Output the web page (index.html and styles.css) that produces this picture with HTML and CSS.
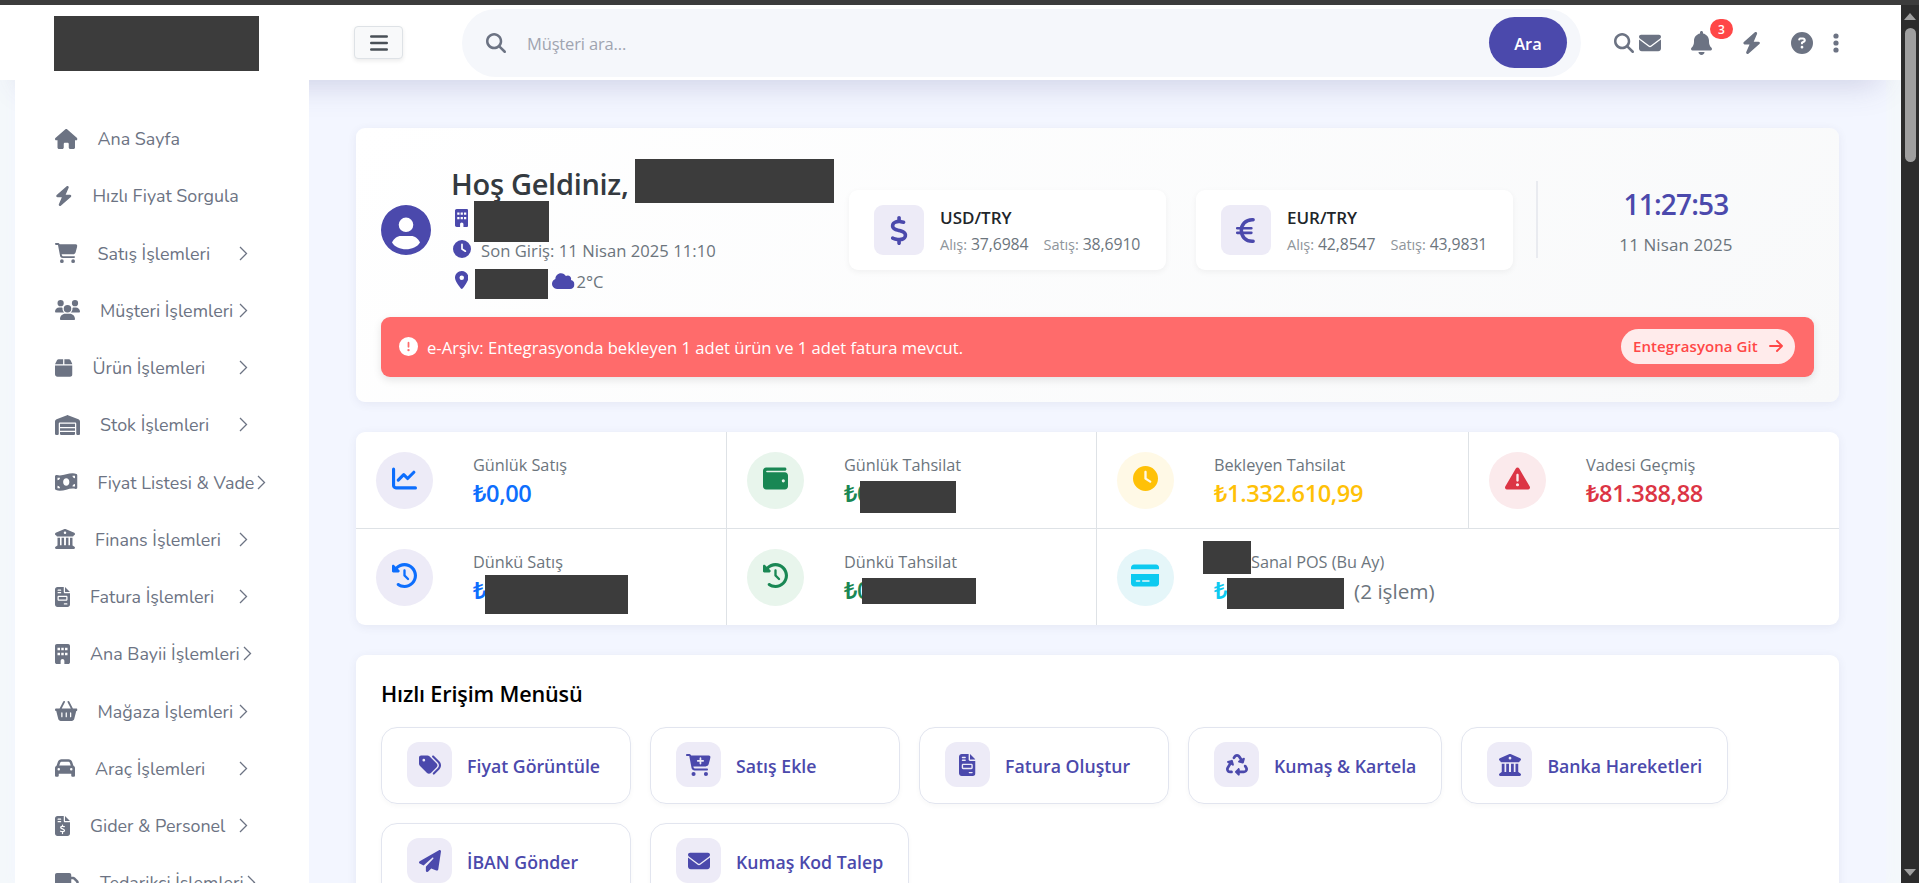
FILE: index.html
```html
<!DOCTYPE html>
<html lang="tr">
<head>
    <meta charset="UTF-8">
    <meta name="viewport" content="width=device-width, initial-scale=1.0">
    <title>Ana Sayfa</title>
    <link rel="stylesheet" href="styles.css">
</head>
<body>
    <!-- İkonlar -->
    <svg class="sprite" xmlns="http://www.w3.org/2000/svg">
        <symbol id="i-home" viewBox="0 0 576 512"><path d="M575.8 255.5c0 18-15 32.1-32 32.1h-32l.7 160.2c0 2.7-.2 5.4-.5 8.1V472c0 22.1-17.9 40-40 40H456c-1.1 0-2.2 0-3.3-.1c-1.4 .1-2.8 .1-4.2 .1H416 392c-22.1 0-40-17.9-40-40V448 384c0-17.7-14.3-32-32-32H256c-17.7 0-32 14.3-32 32v64 24c0 22.1-17.9 40-40 40H160 128.1c-1.5 0-3-.1-4.5-.2c-1.2 .1-2.4 .2-3.6 .2H104c-22.1 0-40-17.9-40-40V360c0-.9 0-1.9 .1-2.8V287.6H32c-18 0-32-14-32-32.1c0-9 3-17 10-24L266.4 8c7-7 15-8 22-8s15 2 21 7L564.8 231.5c8 7 12 15 11 24z"/></symbol>
        <symbol id="i-bolt" viewBox="0 0 448 512"><path d="M349.4 44.6c5.9-13.7 1.5-29.7-10.6-38.5s-28.6-8-39.9 1.8l-256 224c-10 8.8-13.6 22.9-8.9 35.3S50.7 288 64 288H175.5L98.6 467.4c-5.9 13.7-1.5 29.7 10.6 38.5s28.6 8 39.9-1.8l256-224c10-8.8 13.6-22.9 8.9-35.3s-16.6-20.7-30-20.7H272.5L349.4 44.6z"/></symbol>
        <symbol id="i-cart" viewBox="0 0 576 512"><path d="M0 24C0 10.7 10.7 0 24 0H69.5c22 0 41.5 12.8 50.6 32h411c26.3 0 45.5 25 38.6 50.4l-41 152.3c-8.5 31.4-37 53.3-69.5 53.3H170.7l5.4 28.5c2.2 11.3 12.1 19.5 23.6 19.5H488c13.3 0 24 10.7 24 24s-10.7 24-24 24H199.7c-34.6 0-64.3-24.6-70.7-58.5L77.4 54.5c-.7-3.8-4-6.5-7.9-6.5H24C10.7 48 0 37.3 0 24zM128 464a48 48 0 1 1 96 0 48 48 0 1 1 -96 0zm336-48a48 48 0 1 1 0 96 48 48 0 1 1 0-96z"/></symbol>
        <symbol id="i-cart-plus" viewBox="0 0 576 512"><path fill-rule="evenodd" d="M0 24C0 10.7 10.7 0 24 0H69.5c22 0 41.5 12.8 50.6 32h411c26.3 0 45.5 25 38.6 50.4l-41 152.3c-8.5 31.4-37 53.3-69.5 53.3H170.7l5.4 28.5c2.2 11.3 12.1 19.5 23.6 19.5H488c13.3 0 24 10.7 24 24s-10.7 24-24 24H199.7c-34.6 0-64.3-24.6-70.7-58.5L77.4 54.5c-.7-3.8-4-6.5-7.9-6.5H24C10.7 48 0 37.3 0 24zM128 464a48 48 0 1 1 96 0 48 48 0 1 1 -96 0zm336-48a48 48 0 1 1 0 96 48 48 0 1 1 0-96zM252 160c0 11 9 20 20 20h44v44c0 11 9 20 20 20s20-9 20-20V180h44c11 0 20-9 20-20s-9-20-20-20H356V96c0-11-9-20-20-20s-20 9-20 20v44H272c-11 0-20 9-20 20z"/></symbol>
        <symbol id="i-users" viewBox="0 0 640 512"><path d="M144 0a80 80 0 1 1 0 160A80 80 0 1 1 144 0zM512 0a80 80 0 1 1 0 160A80 80 0 1 1 512 0zM0 298.7C0 239.8 47.8 192 106.7 192h42.7c15.9 0 31 3.5 44.6 9.7c-1.3 7.2-1.9 14.7-1.9 22.3c0 38.2 16.8 72.5 43.3 96c-.2 0-.4 0-.7 0H21.3C9.6 320 0 310.4 0 298.7zM405.3 320c-.2 0-.4 0-.7 0c26.6-23.5 43.3-57.8 43.3-96c0-7.6-.7-15-1.9-22.3c13.6-6.3 28.7-9.7 44.6-9.7h42.7C592.2 192 640 239.8 640 298.7c0 11.8-9.6 21.3-21.3 21.3H405.3zM224 224a96 96 0 1 1 192 0 96 96 0 1 1 -192 0zM128 485.3C128 411.7 187.7 352 261.3 352H378.7C452.3 352 512 411.7 512 485.3c0 14.7-11.9 26.7-26.7 26.7H154.7c-14.7 0-26.7-11.9-26.7-26.7z"/></symbol>
        <symbol id="i-box" viewBox="0 0 448 512"><path d="M50.7 58.5L0 160H208V32H93.7C75.5 32 58.9 42.3 50.7 58.5zM240 160H448L397.3 58.5C389.1 42.3 372.5 32 354.3 32H240V160zm208 32H0V416c0 35.3 28.7 64 64 64H384c35.3 0 64-28.7 64-64V192z"/></symbol>
        <symbol id="i-warehouse" viewBox="0 0 640 512"><path d="M0 488V171.3c0-26.2 15.9-49.7 40.2-59.4L308.1 4.8c7.6-3.1 16.1-3.1 23.8 0L599.8 111.9c24.3 9.7 40.2 33.3 40.2 59.4V488c0 13.3-10.7 24-24 24H568c-13.3 0-24-10.7-24-24V224c0-17.7-14.3-32-32-32H128c-17.7 0-32 14.3-32 32V488c0 13.3-10.7 24-24 24H24c-13.3 0-24-10.7-24-24zm488 24l-336 0c-13.3 0-24-10.7-24-24V432H512l0 56c0 13.3-10.7 24-24 24zM128 400V336H512v64H128zm0-96V224H512l0 80H128z"/></symbol>
        <symbol id="i-money" viewBox="0 0 576 512"><path fill-rule="evenodd" d="M0 112.5V422.3c0 18 10.1 35 27 41.3c87 32.5 174 10.3 261-11.9c79.8-20.3 159.6-40.7 239.3-18.9c23 6.3 48.7-9.5 48.7-33.4V89.7c0-18-10.1-35-27-41.3C462 15.9 375 38.1 288 60.3C208.2 80.6 128.4 100.9 48.7 79.1C25.6 72.8 0 88.6 0 112.5zM288 352c-44.2 0-80-43-80-96s35.8-96 80-96s80 43 80 96s-35.8 96-80 96zM64 352c35.3 0 64 28.7 64 64H64V352zm64-208c0 35.3-28.7 64-64 64V144h64zM512 304v64H448c0-35.3 28.7-64 64-64zM448 96h64v64c-35.3 0-64-28.7-64-64z"/></symbol>
        <symbol id="i-bank" viewBox="0 0 512 512"><path fill-rule="evenodd" d="M243.4 2.6l-224 96c-14 6-21.8 21-18.7 35.8S16.8 160 32 160v8c0 13.3 10.7 24 24 24H456c13.3 0 24-10.7 24-24v-8c15.2 0 28.3-10.7 31.3-25.6s-4.8-29.9-18.7-35.8l-224-96c-8-3.4-17.2-3.4-25.2 0zM128 224H64V420.3c-.6 .3-1.2 .7-1.8 1.1l-48 32c-11.7 7.8-17 22.4-12.9 35.9S17.9 512 32 512H480c14.1 0 26.5-9.2 30.6-22.7s-1.1-28.1-12.9-35.9l-48-32c-.6-.4-1.2-.7-1.8-1.1V224H384V416H344V224H280V416H232V224H168V416H128V224zM256 64a32 32 0 1 1 0 64 32 32 0 1 1 0-64z"/></symbol>
        <symbol id="i-invoice" viewBox="0 0 384 512"><path fill-rule="evenodd" d="M64 0C28.7 0 0 28.7 0 64V448c0 35.3 28.7 64 64 64H320c35.3 0 64-28.7 64-64V160H256c-17.7 0-32-14.3-32-32V0H64zM256 0V128H384L256 0zM80 64h64c8.8 0 16 7.2 16 16s-7.2 16-16 16H80c-8.8 0-16-7.2-16-16s7.2-16 16-16zm0 64h64c8.8 0 16 7.2 16 16s-7.2 16-16 16H80c-8.8 0-16-7.2-16-16s7.2-16 16-16zm16 96H288c17.7 0 32 14.3 32 32v64c0 17.7-14.3 32-32 32H96c-17.7 0-32-14.3-32-32V256c0-17.7 14.3-32 32-32zm0 32v64H288V256H96zM240 416h64c8.8 0 16 7.2 16 16s-7.2 16-16 16H240c-8.8 0-16-7.2-16-16s7.2-16 16-16z"/></symbol>
        <symbol id="i-invoice-dollar" viewBox="0 0 384 512"><path fill-rule="evenodd" d="M64 0C28.7 0 0 28.7 0 64V448c0 35.3 28.7 64 64 64H320c35.3 0 64-28.7 64-64V160H256c-17.7 0-32-14.3-32-32V0H64zM256 0V128H384L256 0zM80 64h64c8.8 0 16 7.2 16 16s-7.2 16-16 16H80c-8.8 0-16-7.2-16-16s7.2-16 16-16zm0 64h64c8.8 0 16 7.2 16 16s-7.2 16-16 16H80c-8.8 0-16-7.2-16-16s7.2-16 16-16z"/><path fill="none" stroke="#fff" stroke-width="32" stroke-linecap="round" d="M192 232v24M192 424v24M238 272c-30-12-92-14-92 22c0 44 96 24 96 74c0 42-66 36-100 22"/></symbol>
        <symbol id="i-building" viewBox="0 0 384 512"><path fill-rule="evenodd" d="M48 0C21.5 0 0 21.5 0 48V464c0 26.5 21.5 48 48 48h96V432c0-26.5 21.5-48 48-48s48 21.5 48 48v80h96c26.5 0 48-21.5 48-48V48c0-26.5-21.5-48-48-48H48zM64 96h64v64H64zM160 96h64v64h-64zM256 96h64v64h-64zM64 224h64v64H64zM160 224h64v64h-64zM256 224h64v64h-64z"/></symbol>
        <symbol id="i-basket" viewBox="0 0 576 512"><path fill-rule="evenodd" d="M253.3 35.1c6.1-11.8 1.5-26.3-10.2-32.4s-26.3-1.5-32.4 10.2L117.6 192H32c-17.7 0-32 14.3-32 32s14.3 32 32 32L83.9 463.5C91 492 116.6 512 146 512H430c29.4 0 55-20 62.1-48.5L544 256c17.7 0 32-14.3 32-32s-14.3-32-32-32H458.4L365.3 12.9C359.2 1.2 344.7-3.4 332.9 2.7s-16.3 20.6-10.2 32.4L404.3 192H171.7L253.3 35.1zM192 304v96c0 8.8-7.2 16-16 16s-16-7.2-16-16V304c0-8.8 7.2-16 16-16s16 7.2 16 16zm96-16c8.8 0 16 7.2 16 16v96c0 8.8-7.2 16-16 16s-16-7.2-16-16V304c0-8.8 7.2-16 16-16zm128 16v96c0 8.8-7.2 16-16 16s-16-7.2-16-16V304c0-8.8 7.2-16 16-16s16 7.2 16 16z"/></symbol>
        <symbol id="i-car" viewBox="0 0 512 512"><path fill-rule="evenodd" d="M135.2 117.4L109.1 192H402.9l-26.1-74.6C372.3 104.6 360.2 96 346.6 96H165.4c-13.6 0-25.7 8.6-30.2 21.4zM39.6 196.8L74.8 96.3C88.3 57.8 124.6 32 165.4 32H346.6c40.8 0 77.1 25.8 90.6 64.3l35.2 100.5c23.2 9.6 39.6 32.5 39.6 59.2V400v48c0 17.7-14.3 32-32 32H448c-17.7 0-32-14.3-32-32V400H96v48c0 17.7-14.3 32-32 32H32c-17.7 0-32-14.3-32-32V400 256c0-26.7 16.4-49.6 39.6-59.2zM128 288a32 32 0 1 0 -64 0 32 32 0 1 0 64 0zm288 32a32 32 0 1 0 0-64 32 32 0 1 0 0 64z"/></symbol>
        <symbol id="i-truck" viewBox="0 0 640 512"><path fill-rule="evenodd" d="M48 0C21.5 0 0 21.5 0 48V368c0 26.5 21.5 48 48 48H64c0 53 43 96 96 96s96-43 96-96H384c0 53 43 96 96 96s96-43 96-96h32c17.7 0 32-14.3 32-32s-14.3-32-32-32V288 256 237.3c0-17-6.7-33.3-18.7-45.3L512 114.7c-12-12-28.3-18.7-45.3-18.7H416V48c0-26.5-21.5-48-48-48H48zM416 160h50.7L544 237.3V256H416V160zM112 416a48 48 0 1 1 96 0 48 48 0 1 1 -96 0zm368-48a48 48 0 1 1 0 96 48 48 0 1 1 0-96z"/></symbol>
        <symbol id="i-chevron" viewBox="0 0 9 15"><path fill="none" stroke="currentColor" stroke-width="1.3" d="M1 1l6.5 6.5L1 14"/></symbol>
        <symbol id="i-bars" viewBox="0 0 18 16"><path fill="none" stroke="currentColor" stroke-width="2.4" stroke-linecap="round" d="M1.2 1.5h15.6M1.2 8h15.6M1.2 14.5h15.6"/></symbol>
        <symbol id="i-search" viewBox="0 0 512 512"><path d="M416 208c0 45.9-14.9 88.3-40 122.7L502.6 457.4c12.5 12.5 12.5 32.8 0 45.3s-32.8 12.5-45.3 0L330.7 376c-34.4 25.2-76.8 40-122.7 40C93.1 416 0 322.9 0 208S93.1 0 208 0S416 93.1 416 208zM208 352a144 144 0 1 0 0-288 144 144 0 1 0 0 288z"/></symbol>
        <symbol id="i-mail" viewBox="0 0 512 512"><path d="M48 64C21.5 64 0 85.5 0 112c0 15.1 7.1 29.3 19.2 38.4L236.8 313.6c11.4 8.5 27 8.5 38.4 0L492.8 150.4c12.1-9.1 19.2-23.3 19.2-38.4c0-26.5-21.5-48-48-48H48zM0 176V384c0 35.3 28.7 64 64 64H448c35.3 0 64-28.7 64-64V176L294.4 339.2c-22.8 17.1-54 17.1-76.8 0L0 176z"/></symbol>
        <symbol id="i-bell" viewBox="0 0 448 512"><path d="M224 0c-17.7 0-32 14.3-32 32V51.2C119 66 64 130.6 64 208v18.8c0 47-17.3 92.4-48.5 127.6l-7.4 8.3c-8.4 9.4-10.4 22.9-5.3 34.4S19.4 416 32 416H416c12.6 0 24-7.4 29.2-18.9s3.1-25-5.3-34.4l-7.4-8.3C401.3 319.2 384 273.9 384 226.8V208c0-77.4-55-142-128-156.8V32c0-17.7-14.3-32-32-32zm45.3 493.3c12-12 18.7-28.3 18.7-45.3H224 160c0 17 6.7 33.3 18.7 45.3s28.3 18.7 45.3 18.7s33.3-6.7 45.3-18.7z"/></symbol>
        <symbol id="i-help" viewBox="0 0 512 512"><path fill-rule="evenodd" d="M256 512A256 256 0 1 0 256 0a256 256 0 1 0 0 512zM169.8 165.3c7.9-22.3 29.1-37.3 52.8-37.3h58.3c34.9 0 63.1 28.3 63.1 63.1c0 22.6-12.1 43.5-31.7 54.8L280 264.4c-.2 13-10.9 23.6-24 23.6c-13.3 0-24-10.7-24-24V250.5c0-8.6 4.6-16.5 12.1-20.8l44.3-25.4c4.7-2.7 7.6-7.7 7.6-13.1c0-8.4-6.8-15.1-15.1-15.1H222.6c-3.4 0-6.4 2.1-7.5 5.3l-.4 1.2c-4.4 12.5-18.2 19-30.6 14.6s-19-18.2-14.6-30.6l.4-1.2zM224 352a32 32 0 1 1 64 0 32 32 0 1 1 -64 0z"/></symbol>
        <symbol id="i-dots" viewBox="0 0 6 20"><circle cx="3" cy="3" r="2.6"/><circle cx="3" cy="10" r="2.6"/><circle cx="3" cy="17" r="2.6"/></symbol>
        <symbol id="i-user" viewBox="0 0 50 50"><path fill-rule="evenodd" d="M25 0a25 25 0 1 1 0 50a25 25 0 1 1 0-50zM25 12.5a7.3 7.3 0 1 0 0 14.6a7.3 7.3 0 1 0 0-14.6zM11 37.5c5 9 23 9 28 0c-2-4-5-6.5-9-6.5h-10c-4 0-7 2.5-9 6.5z"/></symbol>
        <symbol id="i-clock" viewBox="0 0 512 512"><path fill-rule="evenodd" d="M256 0a256 256 0 1 1 0 512A256 256 0 1 1 256 0zM232 120V256c0 8 4 15.5 10.7 20l96 64c11 7.4 25.9 4.4 33.3-6.7s4.4-25.9-6.7-33.3L280 243.2V120c0-13.3-10.7-24-24-24s-24 10.7-24 24z"/></symbol>
        <symbol id="i-pin" viewBox="0 0 384 512"><path fill-rule="evenodd" d="M215.7 499.2C267 435 384 279.4 384 192C384 86 298 0 192 0S0 86 0 192c0 87.4 117 243 168.3 307.2c12.3 15.3 35.1 15.3 47.4 0zM192 128a64 64 0 1 1 0 128 64 64 0 1 1 0-128z"/></symbol>
        <symbol id="i-cloud" viewBox="0 0 640 512"><path d="M0 336c0 79.5 64.5 144 144 144H512c70.7 0 128-57.3 128-128c0-61.9-44-113.6-102.4-125.4c4.1-10.7 6.4-22.4 6.4-34.6c0-53-43-96-96-96c-19.7 0-38.1 6-53.3 16.2C367 64.2 315.3 32 256 32C167.6 32 96 103.6 96 192c0 2.7 .1 5.4 .2 8.1C40.2 219.8 0 273.2 0 336z"/></symbol>
        <symbol id="i-dollar" viewBox="0 0 320 512"><path d="M160 0c17.7 0 32 14.3 32 32V67.7c1.6 .2 3.1 .4 4.7 .7c.4 .1 .7 .1 1.1 .2l48 8.8c17.4 3.2 28.9 19.9 25.7 37.2s-19.9 28.9-37.2 25.7l-47.5-8.7c-31.3-4.6-58.9-1.5-78.3 6.2s-27.2 18.3-29 28.1c-2 10.7-.5 16.7 1.2 20.4c1.8 3.9 5.5 8.3 12.8 13.2c16.3 10.7 41.3 17.7 73.7 26.3l2.9 .8c28.6 7.6 63.6 16.8 89.6 33.8c14.2 9.3 27.6 21.9 35.9 39.5c8.5 17.9 10.3 37.9 6.4 59.2c-6.9 38-33.1 63.4-65.6 76.7c-13.7 5.6-28.6 9.2-44.4 11V480c0 17.7-14.3 32-32 32s-32-14.3-32-32V445.1c-.4-.1-.9-.1-1.3-.2l-.2 0 0 0c-24.4-3.8-64.5-14.3-91.5-26.3c-16.1-7.2-23.4-26.1-16.2-42.2s26.1-23.4 42.2-16.2c20.9 9.3 55.3 18.5 75.2 21.6c31.9 4.7 58.2 2 76-5.3c16.9-6.9 24.6-16.9 26.8-28.9c1.9-10.6 .4-16.7-1.3-20.4c-1.9-4-5.6-8.4-13-13.3c-16.4-10.7-41.5-17.7-74-26.3l-2.8-.7 0 0C119.4 279.3 84.4 270 58.4 253c-14.2-9.3-27.5-22-35.8-39.6c-8.4-17.9-10.1-37.9-6.1-59.2C23.7 116 52.3 91.2 84.8 78.3c13.3-5.3 27.9-8.9 43.2-11V32c0-17.7 14.3-32 32-32z"/></symbol>
        <symbol id="i-euro" viewBox="0 0 384 512"><path fill="none" stroke="currentColor" stroke-width="62" stroke-linecap="round" d="M320 66h-18C190 66 112 146 112 256s78 190 190 190h18"/><path fill="none" stroke="currentColor" stroke-width="48" stroke-linecap="round" d="M40 216h248M40 296h248"/></symbol>
        <symbol id="i-alert" viewBox="0 0 512 512"><path fill-rule="evenodd" d="M256 512A256 256 0 1 0 256 0a256 256 0 1 0 0 512zM256 128c13.3 0 24 10.7 24 24V264c0 13.3-10.7 24-24 24s-24-10.7-24-24V152c0-13.3 10.7-24 24-24zM224 352a32 32 0 1 1 64 0 32 32 0 1 1 -64 0z"/></symbol>
        <symbol id="i-warning" viewBox="0 0 512 512"><path fill-rule="evenodd" d="M256 32c14.2 0 27.3 7.5 34.5 19.8l216 368c7.3 12.4 7.3 27.7 .2 40.1S486.3 480 472 480H40c-14.3 0-27.6-7.7-34.7-20.1s-7-27.8 .2-40.1l216-368C228.7 39.5 241.8 32 256 32zm0 128c-13.3 0-24 10.7-24 24V296c0 13.3 10.7 24 24 24s24-10.7 24-24V184c0-13.3-10.7-24-24-24zm32 224a32 32 0 1 0 -64 0 32 32 0 1 0 64 0z"/></symbol>
        <symbol id="i-arrow" viewBox="0 0 14 12"><path fill="none" stroke="currentColor" stroke-width="1.9" stroke-linecap="round" stroke-linejoin="round" d="M1 6h12M8 1l5 5-5 5"/></symbol>
        <symbol id="i-chart" viewBox="0 0 512 512"><path fill="none" stroke="currentColor" stroke-width="64" stroke-linecap="round" stroke-linejoin="round" d="M32 64v336c0 26 22 48 48 48h400M128 288l112-112 80 80 128-128"/></symbol>
        <symbol id="i-wallet" viewBox="0 0 512 512"><path fill-rule="evenodd" d="M64 32C28.7 32 0 60.7 0 96V416c0 35.3 28.7 64 64 64H448c35.3 0 64-28.7 64-64V192c0-35.3-28.7-64-64-64H80c-8.8 0-16-7.2-16-16s7.2-16 16-16H448c17.7 0 32-14.3 32-32s-14.3-32-32-32H64zM416 272a32 32 0 1 1 0 64 32 32 0 1 1 0-64z"/></symbol>
        <symbol id="i-history" viewBox="0 0 512 512"><path d="M75 75L41 41C25.9 25.9 0 36.6 0 57.9V168c0 13.3 10.7 24 24 24H134.1c21.4 0 32.1-25.9 17-41l-30.8-30.8C155 85.5 203 64 256 64c106 0 192 86 192 192s-86 192-192 192c-40.8 0-78.6-12.7-109.7-34.4c-14.5-10.1-34.4-6.6-44.6 7.9s-6.6 34.4 7.9 44.6C151.2 495 201.7 512 256 512c141.4 0 256-114.6 256-256S397.4 0 256 0C185.3 0 121.3 28.7 75 75zm181 53c-13.3 0-24 10.7-24 24V256c0 6.4 2.5 12.5 7 17l72 72c9.4 9.4 24.6 9.4 33.9 0s9.4-24.6 0-33.9l-65-65V152c0-13.3-10.7-24-24-24z"/></symbol>
        <symbol id="i-card" viewBox="0 0 576 512"><path fill-rule="evenodd" d="M64 32C28.7 32 0 60.7 0 96v32H576V96c0-35.3-28.7-64-64-64H64zM576 224H0V416c0 35.3 28.7 64 64 64H512c35.3 0 64-28.7 64-64V224zM112 352h64c8.8 0 16 7.2 16 16s-7.2 16-16 16H112c-8.8 0-16-7.2-16-16s7.2-16 16-16zm112 16c0-8.8 7.2-16 16-16H368c8.8 0 16 7.2 16 16s-7.2 16-16 16H240c-8.8 0-16-7.2-16-16z"/></symbol>
        <symbol id="i-tags" viewBox="0 0 512 512"><path fill-rule="evenodd" d="M345 39.1L472.8 168.4c52.4 53 52.4 138.2 0 191.2L360.8 472.9c-9.3 9.4-24.5 9.5-33.9 .2s-9.5-24.5-.2-33.9L438.6 325.9c33.9-34.3 33.9-89.4 0-123.7L310.9 72.9c-9.3-9.4-9.2-24.6 .2-33.9s24.6-9.2 33.9 .2zM0 229.5V80C0 53.5 21.5 32 48 32H197.5c17 0 33.3 6.7 45.3 18.7l168 168c25 25 25 65.5 0 90.5L277.3 442.7c-25 25-65.5 25-90.5 0l-168-168C6.7 262.7 0 246.5 0 229.5zM144 144a32 32 0 1 0 -64 0 32 32 0 1 0 64 0z"/></symbol>
        <symbol id="i-recycle" viewBox="0 0 512 512"><path d="M174.7 45.1C192.2 17 223 0 256 0s63.8 17 81.3 45.1l38.6 61.7 27-15.6c8.4-4.9 18.9-4.2 26.6 1.7s11.1 15.9 8.6 25.3l-23.4 87.4c-3.4 12.8-16.6 20.4-29.4 17l-87.4-23.4c-9.4-2.5-16.3-10.4-17.6-20s3.4-19.1 11.8-23.9l28.4-16.4L283 79c-5.8-9.3-16-15-27-15s-21.2 5.7-27 15l-17.5 28c-9.2 14.8-28.6 19.5-43.6 10.5c-15.3-9.2-20.2-29.2-10.7-44.4l17.5-28zM429.5 251.9c15-9 34.4-4.3 43.6 10.5l24.4 39.1c9.4 15.1 14.4 32.4 14.6 50.2c.3 53.1-42.7 96.4-95.8 96.4L320 448v32c0 9.7-5.8 18.5-14.8 22.2s-19.3 1.7-26.2-5.2l-64-64c-9.4-9.4-9.4-24.6 0-33.9l64-64c6.9-6.9 17.2-8.9 26.2-5.2s14.8 12.5 14.8 22.2v32l96.2 0c17.6 0 31.9-14.4 31.8-32c0-5.9-1.7-11.7-4.8-16.7l-24.4-39.1c-9.5-15.2-4.7-35.2 10.7-44.4zm-364.6-31L36 204.2c-8.4-4.9-13.1-14.3-11.8-23.9s8.2-17.5 17.6-20l87.4-23.4c12.8-3.4 26 4.2 29.4 17L182 241.2c2.5 9.4-.9 19.3-8.6 25.3s-18.2 6.6-26.6 1.7l-26.5-15.3L68.8 335.3c-3.1 5-4.8 10.8-4.8 16.7c-.1 17.6 14.2 32 31.8 32l32.2 0c17.7 0 32 14.3 32 32s-14.3 32-32 32l-32.2 0C42.7 448-.3 404.8 0 351.6c.1-17.8 5.1-35.1 14.6-50.2l50.3-80.5z"/></symbol>
        <symbol id="i-plane" viewBox="0 0 512 512"><path d="M498.1 5.6c10.1 7 15.4 19.1 13.5 31.2l-64 416c-1.5 9.7-7.4 18.2-16 23s-18.9 5.4-28 1.6L284 427.7l-68.5 74.1c-8.9 9.7-22.9 12.9-35.2 8.1S160 493.2 160 480V396.4c0-4 1.5-7.8 4.2-10.7L331.8 202.8c5.8-6.3 5.6-16-.4-22s-15.7-6.4-22-.7L106 360.8 17.7 316.6C7.1 311.3 .3 300.7 0 288.9s5.9-22.8 16.1-28.7l448-256c10.7-6.1 23.9-5.5 34 1.4z"/></symbol>
    </svg>

    <div class="window-edge"></div>

    <div class="window">
        <div class="page">
            <nav class="navbar">
                <div class="brand"><span class="mask mask-logo"></span></div>
                <button class="menu-toggle"><svg class="icon-bars"><use href="#i-bars"/></svg></button>
                <div class="search">
                    <svg class="icon"><use href="#i-search"/></svg>
                    <span class="search-text">Müşteri ara...</span>
                    <button class="search-button">Ara</button>
                </div>
                <div class="nav-icons">
                    <svg class="icon nav-search"><use href="#i-search"/></svg>
                    <svg class="icon nav-mail"><use href="#i-mail"/></svg>
                    <span class="nav-bell"><svg class="icon w448"><use href="#i-bell"/></svg><span class="badge">3</span></span>
                    <svg class="icon w448 nav-bolt"><use href="#i-bolt"/></svg>
                    <svg class="icon nav-help"><use href="#i-help"/></svg>
                    <svg class="nav-dots"><use href="#i-dots"/></svg>
                </div>
            </nav>

            <div class="body-wrapper">
                <aside class="sidebar">
                    <a class="nav-item"><svg class="icon w576"><use href="#i-home"/></svg><span>Ana Sayfa</span></a>
                    <a class="nav-item"><svg class="icon w448"><use href="#i-bolt"/></svg><span>Hızlı Fiyat Sorgula</span></a>
                    <a class="nav-item"><svg class="icon w576"><use href="#i-cart"/></svg><span>Satış İşlemleri</span><svg class="chevron"><use href="#i-chevron"/></svg></a>
                    <a class="nav-item"><svg class="icon w640"><use href="#i-users"/></svg><span>Müşteri İşlemleri</span><svg class="chevron"><use href="#i-chevron"/></svg></a>
                    <a class="nav-item"><svg class="icon w448"><use href="#i-box"/></svg><span>Ürün İşlemleri</span><svg class="chevron"><use href="#i-chevron"/></svg></a>
                    <a class="nav-item"><svg class="icon w640"><use href="#i-warehouse"/></svg><span>Stok İşlemleri</span><svg class="chevron"><use href="#i-chevron"/></svg></a>
                    <a class="nav-item"><svg class="icon w576"><use href="#i-money"/></svg><span>Fiyat Listesi &amp; Vade</span><svg class="chevron"><use href="#i-chevron"/></svg></a>
                    <a class="nav-item"><svg class="icon"><use href="#i-bank"/></svg><span>Finans İşlemleri</span><svg class="chevron"><use href="#i-chevron"/></svg></a>
                    <a class="nav-item"><svg class="icon w384"><use href="#i-invoice"/></svg><span>Fatura İşlemleri</span><svg class="chevron"><use href="#i-chevron"/></svg></a>
                    <a class="nav-item"><svg class="icon w384"><use href="#i-building"/></svg><span>Ana Bayii İşlemleri</span><svg class="chevron"><use href="#i-chevron"/></svg></a>
                    <a class="nav-item"><svg class="icon w576"><use href="#i-basket"/></svg><span>Mağaza İşlemleri</span><svg class="chevron"><use href="#i-chevron"/></svg></a>
                    <a class="nav-item"><svg class="icon"><use href="#i-car"/></svg><span>Araç İşlemleri</span><svg class="chevron"><use href="#i-chevron"/></svg></a>
                    <a class="nav-item"><svg class="icon w384"><use href="#i-invoice-dollar"/></svg><span>Gider &amp; Personel</span><svg class="chevron"><use href="#i-chevron"/></svg></a>
                    <a class="nav-item"><svg class="icon w640"><use href="#i-truck"/></svg><span>Tedarikçi İşlemleri</span><svg class="chevron"><use href="#i-chevron"/></svg></a>
                </aside>

                <main class="content">
                    <!-- Karşılama -->
                    <section class="card welcome">
                        <div class="welcome-top">
                            <svg class="avatar"><use href="#i-user"/></svg>
                            <div class="welcome-info">
                                <h3 class="welcome-title"><span>Hoş Geldiniz,</span><span class="mask mask-name"></span></h3>
                                <div class="info-row"><span class="info-icon"><svg class="icon w384"><use href="#i-building"/></svg></span><span class="mask mask-company"></span></div>
                                <div class="info-row"><span class="info-icon"><svg class="icon"><use href="#i-clock"/></svg></span><span class="last-login">Son Giriş: 11 Nisan 2025 11:10</span></div>
                                <div class="info-row"><span class="info-icon"><svg class="icon w384"><use href="#i-pin"/></svg></span><span class="mask mask-city"></span><svg class="icon w640"><use href="#i-cloud"/></svg><span class="temp">2°C</span></div>
                            </div>
                            <div class="rates">
                                <div class="rate">
                                    <span class="rate-icon"><svg class="icon w320"><use href="#i-dollar"/></svg></span>
                                    <div>
                                        <div class="rate-name">USD/TRY</div>
                                        <div class="rate-values"><small>Alış:</small> 37,6984 <small class="sell">Satış:</small> 38,6910</div>
                                    </div>
                                </div>
                                <div class="rate">
                                    <span class="rate-icon"><svg class="icon w384"><use href="#i-euro"/></svg></span>
                                    <div>
                                        <div class="rate-name">EUR/TRY</div>
                                        <div class="rate-values"><small>Alış:</small> 42,8547 <small class="sell">Satış:</small> 43,9831</div>
                                    </div>
                                </div>
                            </div>
                            <div class="clock">
                                <div class="clock-time">11:27:53</div>
                                <div class="clock-date">11 Nisan 2025</div>
                            </div>
                        </div>
                        <div class="alert">
                            <svg class="icon"><use href="#i-alert"/></svg>
                            <span class="alert-text">e-Arşiv: Entegrasyonda bekleyen 1 adet ürün ve 1 adet fatura mevcut.</span>
                            <a class="alert-button"><span>Entegrasyona Git</span><svg class="icon-arrow"><use href="#i-arrow"/></svg></a>
                        </div>
                    </section>

                    <!-- Özet -->
                    <section class="card stats">
                        <div class="stat blue">
                            <span class="stat-icon"><svg class="icon"><use href="#i-chart"/></svg></span>
                            <div><div class="stat-label">Günlük Satış</div><div class="stat-value">₺0,00</div></div>
                        </div>
                        <div class="stat green">
                            <span class="stat-icon"><svg class="icon"><use href="#i-wallet"/></svg></span>
                            <div><div class="stat-label">Günlük Tahsilat</div><div class="stat-value">₺0<span class="mask mask-v1"></span></div></div>
                        </div>
                        <div class="stat yellow">
                            <span class="stat-icon"><svg class="icon"><use href="#i-clock"/></svg></span>
                            <div><div class="stat-label">Bekleyen Tahsilat</div><div class="stat-value">₺1.332.610,99</div></div>
                        </div>
                        <div class="stat red">
                            <span class="stat-icon"><svg class="icon"><use href="#i-warning"/></svg></span>
                            <div><div class="stat-label">Vadesi Geçmiş</div><div class="stat-value">₺81.388,88</div></div>
                        </div>
                        <div class="stat blue">
                            <span class="stat-icon"><svg class="icon"><use href="#i-history"/></svg></span>
                            <div><div class="stat-label">Dünkü Satış</div><div class="stat-value">₺<span class="mask mask-v2"></span></div></div>
                        </div>
                        <div class="stat green">
                            <span class="stat-icon"><svg class="icon"><use href="#i-history"/></svg></span>
                            <div><div class="stat-label">Dünkü Tahsilat</div><div class="stat-value">₺0<span class="mask mask-v3"></span></div></div>
                        </div>
                        <div class="stat cyan wide">
                            <span class="stat-icon"><svg class="icon w576"><use href="#i-card"/></svg></span>
                            <div><div class="stat-label pos-label"><span class="mask mask-bank"></span>Sanal POS (Bu Ay)</div><div class="stat-value">₺<span class="mask mask-v4"></span><span class="stat-note">(2 işlem)</span></div></div>
                        </div>
                    </section>

                    <!-- Hızlı erişim -->
                    <section class="card quick">
                        <h4 class="quick-title">Hızlı Erişim Menüsü</h4>
                        <div class="quick-list">
                            <a class="quick-item"><span class="quick-icon"><svg class="icon"><use href="#i-tags"/></svg></span>Fiyat Görüntüle</a>
                            <a class="quick-item"><span class="quick-icon"><svg class="icon w576"><use href="#i-cart-plus"/></svg></span>Satış Ekle</a>
                            <a class="quick-item"><span class="quick-icon"><svg class="icon w384"><use href="#i-invoice"/></svg></span>Fatura Oluştur</a>
                            <a class="quick-item"><span class="quick-icon"><svg class="icon"><use href="#i-recycle"/></svg></span>Kumaş &amp; Kartela</a>
                            <a class="quick-item"><span class="quick-icon"><svg class="icon"><use href="#i-bank"/></svg></span>Banka Hareketleri</a>
                            <a class="quick-item"><span class="quick-icon"><svg class="icon"><use href="#i-plane"/></svg></span>İBAN Gönder</a>
                            <a class="quick-item"><span class="quick-icon"><svg class="icon"><use href="#i-mail"/></svg></span>Kumaş Kod Talep</a>
                        </div>
                    </section>
                </main>
            </div>
        </div>

        <div class="scrollbar">
            <span class="scroll-up"></span>
            <span class="scroll-thumb"></span>
            <span class="scroll-down"></span>
        </div>
    </div>
</body>
</html>
```
FILE: styles.css
```css
* {
    box-sizing: border-box;
}

body, html {
    margin: 0;
    padding: 0;
    height: 100%;
    overflow: hidden;
    font-family: "Segoe UI", "Open Sans", "Noto Sans", sans-serif;
    background-color: #f4f8fb;
    color: #212529;
}

h3, h4 {
    margin: 0;
    font-weight: 600;
}

button {
    border: none;
    padding: 0;
    font-family: inherit;
}

.sprite {
    display: none;
}

.icon {
    width: 1em;
    height: 1em;
    fill: currentColor;
    flex-shrink: 0;
}

.w320 { width: .625em; }
.w384 { width: .75em; }
.w448 { width: .875em; }
.w576 { width: 1.125em; }
.w640 { width: 1.25em; }

.mask {
    display: block;
    flex-shrink: 0;
    background-color: #3c3c3c;
}

.window-edge {
    height: 5px;
    background-color: #3c3c3c;
}

.window {
    display: flex;
    height: calc(100% - 5px);
}

.page {
    flex: 1;
    min-width: 0;
    display: flex;
    flex-direction: column;
    overflow: hidden;
}

/* Üst menü */
.navbar {
    position: relative;
    z-index: 1;
    flex-shrink: 0;
    display: flex;
    align-items: center;
    height: 75px;
    background-color: #fff;
    box-shadow: 0 25px 32px -22px rgba(75,77,140,0.25);
    color: #6c7383;
}

.brand {
    width: 354px;
    padding-left: 54px;
}

.mask-logo {
    width: 205px;
    height: 55px;
    margin-top: 2px;
}

.menu-toggle {
    display: flex;
    align-items: center;
    justify-content: center;
    width: 49px;
    height: 33px;
    background-color: #f8f9fa;
    border: 1px solid #dee2e6;
    border-radius: 4px;
    box-shadow: 0 2px 4px rgba(0,0,0,0.08);
    color: #495057;
}

.icon-bars {
    width: 18px;
    height: 16px;
}

.search {
    display: flex;
    align-items: center;
    width: 1119px;
    height: 68px;
    margin-left: 59px;
    padding: 0 14px 0 24px;
    border-radius: 34px;
    background-color: #f5f7fb;
    font-size: 20px;
}

.search-text {
    flex: 1;
    margin-left: 21px;
    padding-top: 1px;
    font-size: 16.5px;
    letter-spacing: -.15px;
    color: #a0a4b0;
}

.search-button {
    width: 78px;
    height: 51px;
    padding-top: 2px;
    border-radius: 26px;
    background-color: #4b49ac;
    color: #fff;
    font-size: 16.5px;
    font-weight: 600;
}

.nav-icons {
    display: flex;
    align-items: center;
    margin-left: 33px;
    font-size: 22px;
}

.nav-search { font-size: 20px; }
.nav-mail { margin-left: 5px; }

.nav-bell {
    position: relative;
    display: flex;
    margin-left: 30px;
    font-size: 24px;
}

.badge {
    position: absolute;
    left: 19px;
    top: -12px;
    width: 23px;
    height: 20px;
    border-radius: 10px;
    background-color: #ff4747;
    color: #fff;
    font-size: 12px;
    font-weight: 600;
    line-height: 21px;
    text-align: center;
}

.nav-bolt { margin-left: 30px; }
.nav-help { margin-left: 30px; }

.nav-dots {
    width: 6px;
    height: 20px;
    margin-left: 20px;
    fill: currentColor;
}

/* Sayfa gövdesi */
.body-wrapper {
    flex: 1;
    min-height: 0;
    display: flex;
    margin: 0 15px;
    background-color: #f3f6ff;
    box-shadow: 0 0 14px #f3f6ff;
}

.sidebar {
    flex-shrink: 0;
    position: relative;
    z-index: 2;
    width: 294px;
    padding: 30px 0 0 40px;
    background-color: #fff;
    overflow: hidden;
}

.nav-item {
    display: flex;
    align-items: center;
    width: max-content;
    min-width: 193px;
    height: 57.25px;
    font-size: 20px;
    color: #6c7383;
}

.nav-item span {
    margin-left: 20px;
    padding: 1px 3px 0 0;
    font-family: "Nunito", "Open Sans", sans-serif;
    font-size: 17.9px;
}

.chevron {
    width: 9px;
    height: 15px;
    margin-left: auto;
}

.content {
    flex: 1;
    min-width: 0;
    padding: 48px 47px 0;
}

.card {
    background-color: #fff;
    border-radius: 9px;
    box-shadow: 0 2px 10px rgba(60,64,120,0.08);
}

/* Karşılama kartı */
.welcome {
    height: 274px;
    padding: 25px;
    background: linear-gradient(135deg, #fff 0%, #f8f9fa 100%);
}

.welcome-top {
    display: flex;
    align-items: center;
    height: 154px;
}

.avatar {
    width: 50px;
    height: 50px;
    fill: #4b49ac;
}

.welcome-info {
    width: 397px;
    height: 154px;
    margin-left: 21px;
    padding-top: 6px;
    flex-shrink: 0;
}

.welcome-title {
    display: flex;
    align-items: center;
    justify-content: space-between;
    width: 383px;
    height: 44px;
    margin-left: -1px;
    padding-left: 0;
    font-size: 29px;
    letter-spacing: -.3px;
    white-space: nowrap;
    color: #343a40;
}

.welcome-title span:first-child {
    padding-top: 5px;
}

.mask-name {
    width: 199px;
    height: 44px;
}

.info-row {
    display: flex;
    align-items: center;
    height: 31px;
    font-size: 18px;
    color: #4b49ac;
}

.info-icon {
    display: flex;
    justify-content: center;
    width: 19px;
    margin-top: -1px;
}

.mask-company {
    width: 75px;
    height: 41px;
    margin-left: 3px;
    margin-top: 6px;
}

.last-login {
    margin-left: 10px;
    padding-top: 2px;
    font-size: 16.6px;
    letter-spacing: .04px;
    color: #6c757d;
}

.mask-city {
    width: 73px;
    height: 30px;
    margin: 6px 4px 0 4px;
}

.temp {
    margin-left: 2px;
    padding-top: 1px;
    font-size: 16.6px;
    letter-spacing: -.1px;
    color: #6c757d;
}

.rates {
    display: flex;
    gap: 30px;
}

.rate {
    display: flex;
    align-items: center;
    width: 317px;
    height: 80px;
    padding-left: 25px;
    border-radius: 9px;
    background-color: #fff;
    box-shadow: 0 2px 6px rgba(0,0,0,0.05);
}

.rate-icon {
    display: flex;
    align-items: center;
    justify-content: center;
    width: 50px;
    height: 50px;
    margin-right: 16px;
    border-radius: 9px;
    background-color: #edebf7;
    color: #4b49ac;
    font-size: 29px;
}

.rate-name {
    padding-top: 1px;
    font-size: 17px;
    font-weight: 600;
    line-height: 24px;
    letter-spacing: 0;
    color: #212529;
}

.rate-values {
    margin-top: 2px;
    font-size: 15.8px;
    line-height: 24px;
    letter-spacing: -.1px;
    white-space: nowrap;
    color: #6c757d;
}

.rate-values small {
    font-size: 14.6px;
    color: #8f959b;
}

.rate-values .sell {
    margin-left: 11px;
}

.clock {
    flex: 1;
    height: 77px;
    margin: -22px 0 0 23px;
    border-left: 2px solid #e9ebf0;
    text-align: center;
    white-space: nowrap;
}

.clock-time {
    padding-top: 1px;
    font-size: 28px;
    font-weight: 600;
    line-height: 44px;
    letter-spacing: -.8px;
    color: #4b49ac;
}

.clock-date {
    margin-top: 6px;
    font-size: 17px;
    line-height: 26px;
    letter-spacing: .08px;
    color: #6c757d;
}

.alert {
    display: flex;
    align-items: center;
    height: 60px;
    margin-top: 10px;
    padding: 0 19px 0 18px;
    border-radius: 9px;
    background-color: #ff6b6b;
    box-shadow: 0 3px 8px rgba(0,0,0,0.1);
    color: #fff;
    font-size: 19px;
}

.alert .icon {
    margin-top: -1px;
}

.alert-text {
    flex: 1;
    margin-left: 9px;
    font-size: 16.6px;
    letter-spacing: 0;
}

.alert-button {
    display: flex;
    align-items: center;
    justify-content: space-between;
    width: 174px;
    height: 35px;
    margin-top: -2px;
    padding: 0 12px;
    border-radius: 18px;
    background-color: #ffebeb;
    color: #ff4747;
    font-size: 15px;
    font-weight: 600;
    letter-spacing: .08px;
}

.icon-arrow {
    width: 14px;
    height: 12px;
}

/* Özet kutuları */
.stats {
    display: grid;
    grid-template-columns: 371px 370px 372px 1fr;
    grid-template-rows: 97px 96px;
    height: 193px;
    margin-top: 30px;
}

.stat {
    display: flex;
    align-items: center;
    padding-left: 20px;
    border-right: 1px solid #dee2e6;
}

.stat:nth-child(-n+4) {
    border-bottom: 1px solid #dee2e6;
}

.stat.red,
.stat.wide {
    border-right: none;
}

.stat.wide {
    grid-column: span 2;
}

.stat-icon {
    display: flex;
    align-items: center;
    justify-content: center;
    width: 57px;
    height: 57px;
    margin-right: 40px;
    border-radius: 50%;
    font-size: 25px;
    padding-bottom: 3px;
}

.stat-label {
    position: relative;
    padding-top: 2px;
    font-size: 16.3px;
    line-height: 24px;
    letter-spacing: -.03px;
    color: #6c757d;
}

.stat-value {
    position: relative;
    margin-top: 1px;
    font-size: 23.6px;
    font-weight: 600;
    line-height: 31px;
    letter-spacing: -.4px;
    white-space: nowrap;
}

.blue { color: #0d6efd; }
.green { color: #198754; }
.yellow { color: #ffc107; }
.red { color: #dc3545; }
.cyan { color: #0dcaf0; }

.blue .stat-icon { background-color: #edebf7; }
.green .stat-icon { background-color: #e8f5ec; }
.yellow .stat-icon { background-color: #fff9e6; }
.red .stat-icon { background-color: #fbeaec; }
.cyan .stat-icon { background-color: #e5f6f9; }

/* Gizlenen tutarların üstünü kapatır */
.stat .mask {
    position: absolute;
}

.mask-v1 { left: 16px; top: 3px; width: 96px; height: 32px; }
.mask-v2 { left: 12px; top: 0; width: 143px; height: 39px; }
.mask-v3 { left: 18px; top: 3px; width: 114px; height: 26px; }
.mask-v4 { left: 13px; top: 3px; width: 117px; height: 31px; }
.mask-bank { left: -11px; top: -7px; width: 48px; height: 33px; }

.pos-label {
    padding-left: 37px;
}

.stat-note {
    margin-left: 127px;
    font-size: 20.8px;
    font-weight: 400;
    letter-spacing: -.05px;
    color: #6c757d;
}

/* Hızlı erişim menüsü */
.quick {
    height: 300px;
    margin-top: 30px;
    padding: 24px 25px 0;
}

.quick-title {
    font-size: 21.6px;
    line-height: 30px;
    letter-spacing: -.15px;
    color: #000;
}

.quick-list {
    display: flex;
    flex-wrap: wrap;
    gap: 19px;
    margin-top: 18px;
}

.quick-item {
    display: flex;
    align-items: center;
    min-width: 250px;
    height: 77px;
    padding: 0 25px;
    border: 1px solid #e2e5ef;
    border-radius: 16px;
    box-shadow: 0 2px 5px rgba(0,0,0,0.03);
    color: #4b49ac;
    font-size: 17.7px;
    font-weight: 600;
    letter-spacing: .02px;
}

.quick-icon {
    display: flex;
    align-items: center;
    justify-content: center;
    width: 45px;
    height: 45px;
    margin: 0 15px 2px 0;
    border-radius: 12px;
    background-color: #edebf7;
    font-size: 22px;
}

/* Kaydırma çubuğu */
.scrollbar {
    display: flex;
    flex-direction: column;
    align-items: center;
    width: 18px;
    padding: 8px 0 7px;
    background-color: #2c2c2c;
}

.scroll-up,
.scroll-down {
    border: 6px solid transparent;
}

.scroll-up {
    border-top: none;
    border-bottom: 7px solid #9f9f9f;
}

.scroll-down {
    margin-top: auto;
    border-bottom: none;
    border-top: 7px solid #9f9f9f;
}

.scroll-thumb {
    width: 11px;
    height: 134px;
    margin-top: 8px;
    border-radius: 6px;
    background-color: #9f9f9f;
}
```
